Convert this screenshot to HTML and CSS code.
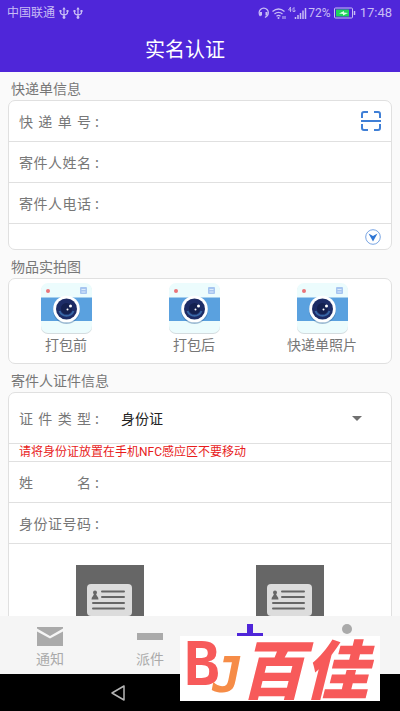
FILE: index.html
```html
<!DOCTYPE html>
<html lang="zh-CN">
<head>
<meta charset="utf-8">
<meta name="viewport" content="width=device-width, initial-scale=1">
<title>实名认证</title>
<link rel="stylesheet" href="styles.css">
</head>
<body>
<svg class="defs" aria-hidden="true">
  <symbol id="usb" viewBox="0 0 10 12">
    <path d="M5 1v9M1.500 4v1.500q0 2 3.500 2.500M8.500 4v1.500q0 2-3.500 2.500" fill="none" stroke="currentColor" stroke-width="1.200"/>
    <path d="M3.300 2.500 5 0l1.700 2.500zM.5 3h2v2h-2zM7.500 3h2v2h-2z" fill="currentColor"/>
    <circle cx="5" cy="10.500" r="1.400" fill="currentColor"/>
  </symbol>
  <symbol id="camera" viewBox="0 0 51 51">
    <rect y="1" width="51" height="50" rx="7" fill="#d4dcdf"/>
    <rect width="51" height="50" rx="7" fill="#ecfcfd"/>
    <path d="M0 14.500h51V38H0z" fill="#5aa1df"/>
    <circle cx="7" cy="8" r="2" fill="#ea7479"/>
    <rect x="39" y="4" width="7" height="7" rx="1" fill="#a6c5f0"/>
    <path d="M40.500 6.500h4M40.500 9h4" stroke="#dcebfb"/>
    <circle cx="25.500" cy="27.500" r="13.500" fill="#3c6c9f" opacity=".45"/>
    <circle cx="25.500" cy="26" r="13.300" fill="#fff"/>
    <circle cx="25.500" cy="26" r="10.500" fill="#1d2c66"/>
    <path d="M18.500 28a7.500 7.500 0 0 0 14 0" fill="none" stroke="#3866a5" stroke-width="2"/>
    <circle cx="25.500" cy="25.500" r="5.500" fill="#14204f"/>
    <circle cx="29.500" cy="23" r="1.500" fill="#fff"/>
    <circle cx="26.500" cy="26.500" r="1" fill="#fff"/>
  </symbol>
  <symbol id="idcard" viewBox="0 0 68 68">
    <path d="M0 0h68v68H0z" fill="#666"/>
    <rect x="11" y="19" width="45" height="32" rx="4" fill="#dcdcdc"/>
    <circle cx="19" cy="27.500" r="2" fill="#666"/>
    <path d="M18 29h2l1 2q1.500 1 1.500 3.500h-7q0-2.500 1.500-3.500z" fill="#666"/>
    <path d="M26 26.500h22M26 32h22M17 38h31M17 43.500h31" stroke="#666" stroke-width="2" stroke-linecap="round"/>
  </symbol>
</svg>

<header class="top">
  <div class="status">
    <span>中国联通</span>
    <svg class="usb" aria-hidden="true"><use href="#usb"/></svg>
    <svg class="usb" aria-hidden="true"><use href="#usb"/></svg>
    <svg class="signals" viewBox="0 0 50 14" aria-hidden="true">
      <g fill="none" stroke="currentColor" stroke-width="1.300">
        <path d="M2.500 10A4.600 4.600 0 1 1 9 10l-2 1.500"/>
        <path d="M3 6v3.500M8.500 6v3.500" stroke-width="2"/>
        <path d="M14.500 5.500q6-5 12 0M16.500 8q4-3.300 8 0M18.500 10.200q2-1.700 4 0"/>
      </g>
      <circle cx="20.500" cy="12" r="1" fill="currentColor"/>
      <path d="M25 10v3M27 10v3" stroke="currentColor"/>
      <path d="M32.500 1 30.500 4h3M32.500 1v5M37 2h-2v3.500h2V4h-1" fill="none" stroke="currentColor" stroke-width=".8"/>
      <path d="M37.500 11v2M40 9v4M42.500 7v6M45 4.500V13M47.500 2v11" stroke="currentColor" stroke-width="1.500"/>
    </svg>
    <span>72%</span>
    <svg class="battery" viewBox="0 0 22 12" aria-hidden="true">
      <rect x=".5" y="1" width="18" height="10" rx="1" fill="none" stroke="currentColor"/>
      <path d="M2 2.500h13v7H2z" fill="#1fd45c"/>
      <path d="M5 6.500 10 4v1.500l4 .5-5 2.500V7z" fill="#d7ffe4"/>
      <path d="M20.500 4v4" stroke="currentColor" stroke-width="1.500"/>
    </svg>
    <time>17:48</time>
  </div>
  <h1>实名认证</h1>
</header>

<main>
  <h2>快递单信息</h2>
  <section class="card">
    <div class="row">
      <label for="no">快 递 单 号</label><i>:</i><input id="no" type="text">
      <button class="scan" type="button" aria-label="扫描">
        <svg viewBox="0 0 20 20"><path d="M1 7V3q0-2 2-2h4M13 1h4q2 0 2 2v4M1 13v4q0 2 2 2h4M13 19h4q2 0 2-2v-4M0 10h20" fill="none" stroke="#3f7fd6" stroke-width="2"/></svg>
      </button>
    </div>
    <div class="row"><label for="sender">寄件人姓名</label><i>:</i><input id="sender" type="text"></div>
    <div class="row"><label for="phone">寄件人电话</label><i>:</i><input id="phone" type="tel"></div>
    <div class="row more">
      <button type="button" aria-label="展开">
        <svg viewBox="0 0 16 16"><circle cx="8" cy="8" r="7.300" fill="none" stroke="#79a5e3"/><path d="M3.500 4.500 8 7l4.500-2.500L8 12.500z" fill="#2f76d4"/></svg>
      </button>
    </div>
  </section>

  <h2>物品实拍图</h2>
  <section class="card photos">
    <button type="button"><svg><use href="#camera"/></svg>打包前</button>
    <button type="button"><svg><use href="#camera"/></svg>打包后</button>
    <button type="button"><svg><use href="#camera"/></svg>快递单照片</button>
  </section>

  <h2>寄件人证件信息</h2>
  <section class="card">
    <div class="row type">
      <label for="type">证 件 类 型</label><i>:</i>
      <select id="type"><option>身份证</option></select>
      <svg class="arrow" viewBox="0 0 10 5" aria-hidden="true"><path d="M0 0h10L5 5z" fill="#707070"/></svg>
    </div>
    <p class="hint">请将身份证放置在手机NFC感应区不要移动</p>
    <div class="row"><label for="name">姓 名</label><i>:</i><input id="name" type="text"></div>
    <div class="row"><label for="idno">身份证号码</label><i>:</i><input id="idno" type="text"></div>
    <div class="scans">
      <button type="button" aria-label="身份证正面"><svg><use href="#idcard"/></svg></button>
      <button type="button" aria-label="身份证反面"><svg><use href="#idcard"/></svg></button>
    </div>
  </section>
</main>

<footer>
  <nav>
    <a href="#"><svg viewBox="0 0 26 24"><path d="M0 3h26v1.500L13 12 0 4.500zM0 7.500l13 7 13-7V22H0z" fill="#aaa"/></svg>通知</a>
    <a href="#"><svg viewBox="0 0 26 24"><path d="M0 9h26v7H0z" fill="#aaa"/></svg>派件</a>
    <a href="#" aria-label="添加"><svg viewBox="0 0 26 24"><path d="M10 0h6v9h10v6H16v9h-6v-9H0V9h10z" fill="#4f26d9"/></svg></a>
    <a href="#" aria-label="我的"><svg viewBox="0 0 26 24"><circle cx="10" cy="5" r="5" fill="#aaa"/><path d="M1 24q0-12 9-12t9 12z" fill="#aaa"/></svg></a>
  </nav>
  <div class="system">
    <button type="button" aria-label="返回"><svg viewBox="0 0 16 18"><path d="M14 2v14L2 9z" fill="none" stroke="#b5b5b5" stroke-width="1.500" stroke-linejoin="round"/></svg></button>
  </div>
  <div class="brand"><b class="b">B</b><b class="j">J</b><strong>百佳</strong></div>
</footer>
</body>
</html>
```

FILE: styles.css
```css
* { box-sizing: border-box; }

body {
  margin: 0;
  height: 100vh;
  display: flex;
  flex-direction: column;
  overflow: hidden;
  background: #fafafa;
  color: #777;
  font: 14px/20px "Noto Sans CJK SC", sans-serif;
}

svg { display: block; }
.defs { position: absolute; width: 0; height: 0; }

button {
  padding: 0;
  border: 0;
  background: none;
  color: inherit;
  font: inherit;
}

.top {
  flex: none;
  height: 72px;
  background: #4f26d9;
  color: #fff;
}

.status {
  display: flex;
  align-items: center;
  height: 26px;
  padding: 0 8px 0 7px;
  color: #c8bdf5;
  font-family: Roboto, "Noto Sans CJK SC", sans-serif;
  font-size: 12px;
}
.status time { margin-left: 4px; font-size: 13px; }
.usb { width: 10px; height: 12px; margin-left: 4px; }
.signals { width: 50px; height: 14px; margin-left: auto; }
.battery { width: 22px; height: 12px; margin-left: 3px; }

h1 {
  margin: 0;
  font-size: 20px;
  font-weight: 400;
  line-height: 46px;
  text-align: center;
  padding-right: 30px;
}

main {
  flex: 1;
  min-height: 0;
  overflow: hidden;
  padding: 0 8px;
}

h2 {
  margin: 0;
  padding: 6px 3px 2px;
  font-size: 14px;
  font-weight: 400;
  line-height: 20px;
}

.card {
  border: 1px solid #e0e0e0;
  border-radius: 7px;
  background: #fff;
}

.row {
  display: flex;
  align-items: center;
  height: 41px;
  padding: 0 10px;
  border-bottom: 1px solid #e0e0e0;
}
.row label {
  flex: none;
  width: 72px;
  text-align: justify;
  text-align-last: justify;
}
.row i { flex: none; width: 8px; text-align: right; font-style: normal; }
.row input {
  flex: 1;
  min-width: 0;
  border: 0;
  outline: 0;
  background: none;
  color: #222;
  font: inherit;
}
.scan svg { width: 20px; height: 20px; }
.row.more { height: 25px; justify-content: flex-end; border: 0; }
.more svg { width: 16px; height: 16px; }

.photos {
  display: flex;
  justify-content: space-between;
  height: 86px;
  padding: 4px 33px 0 21px;
}
.photos button {
  display: flex;
  flex-direction: column;
  align-items: center;
  width: 72px;
}
.photos svg { width: 51px; height: 51px; }

.row.type { height: 51px; padding-right: 29px; }
.type select {
  flex: 1;
  margin-left: 22px;
  padding: 0;
  border: 0;
  outline: 0;
  appearance: none;
  background: none;
  color: #222;
  font: inherit;
}
.arrow { width: 10px; height: 5px; }

.hint {
  margin: 0;
  padding: 0 10px;
  border-bottom: 1px solid #e0e0e0;
  color: #e81c1c;
  font-family: Roboto, "Noto Sans CJK SC", sans-serif;
  font-size: 12px;
  line-height: 17px;
}

.scans {
  display: flex;
  justify-content: space-between;
  padding: 21px 67px;
}
.scans svg { width: 68px; height: 68px; }

footer { position: relative; flex: none; }

nav {
  display: grid;
  grid-template-columns: repeat(4, 1fr);
  height: 58px;
  padding-top: 8px;
  background: #f5f5f5;
}
nav a {
  display: flex;
  flex-direction: column;
  align-items: center;
  color: #aaa;
  text-decoration: none;
}
nav svg { width: 26px; height: 24px; }

.system {
  display: flex;
  align-items: center;
  height: 37px;
  padding-left: 110px;
  background: #000;
}
.system svg { width: 16px; height: 18px; }

.brand {
  position: absolute;
  right: 20px;
  bottom: 10px;
  display: flex;
  width: 200px;
  height: 65px;
  padding-left: 4px;
  background: #fff;
  color: #f75a5a;
  line-height: 60px;
}
.brand .b { font-family: "DejaVu Sans Mono", monospace; font-size: 60px; line-height: 56px; }
.brand .j {
  margin-left: -8px;
  padding-top: 14px;
  color: #f68c47;
  font-family: "DejaVu Sans Mono", monospace;
  font-size: 50px;
  font-style: italic;
  line-height: 50px;
}
.brand strong { margin-left: -2px; font-size: 64px; font-style: italic; font-weight: 900; }
```
